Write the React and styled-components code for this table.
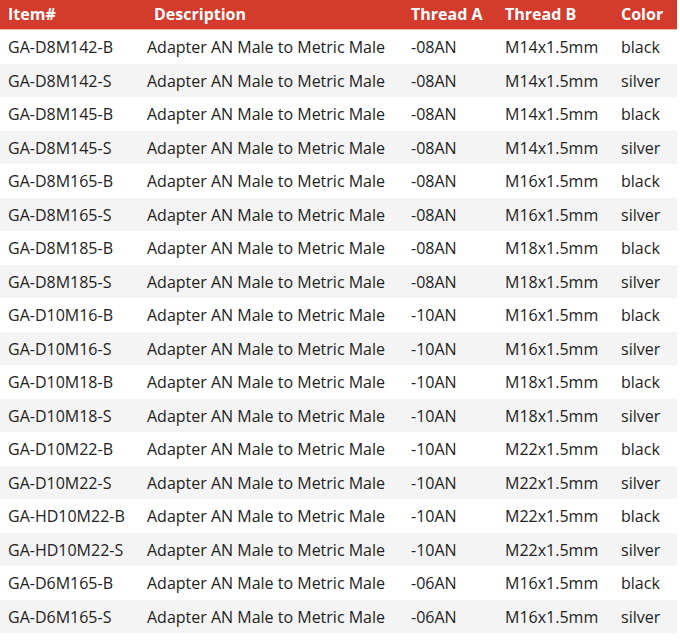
import styled, { createGlobalStyle } from 'styled-components'

const GlobalStyle = createGlobalStyle`
  body {
    margin: 0;
    background: #ffffff;
    font-family: 'Open Sans', 'Liberation Sans', sans-serif;
  }
`

const Table = styled.table`
  width: 677px;
  border-collapse: collapse;
  table-layout: fixed;
  font-size: 16px;
  color: #222222;
`

const HeadRow = styled.tr`
  background: #d33b2c;
  border-bottom: 1px solid #f1b9b2;
`

const HeadCell = styled.th`
  box-sizing: border-box;
  height: 29px;
  padding: 0 0 1px ${(props) => props.$pad || 8}px;
  text-align: left;
  font-weight: 700;
  color: #ffffff;
  line-height: 28px;
  white-space: nowrap;
`

const Row = styled.tr`
  background: ${(props) => (props.$odd ? '#f4f4f4' : '#ffffff')};
`

const Cell = styled.td`
  box-sizing: border-box;
  height: 33.5px;
  padding: 1px 0 0 8px;
  line-height: 32.5px;
  white-space: nowrap;
`

const rows = [
  ['GA-D8M142-B', '-08AN', 'M14x1.5mm', 'black'],
  ['GA-D8M142-S', '-08AN', 'M14x1.5mm', 'silver'],
  ['GA-D8M145-B', '-08AN', 'M14x1.5mm', 'black'],
  ['GA-D8M145-S', '-08AN', 'M14x1.5mm', 'silver'],
  ['GA-D8M165-B', '-08AN', 'M16x1.5mm', 'black'],
  ['GA-D8M165-S', '-08AN', 'M16x1.5mm', 'silver'],
  ['GA-D8M185-B', '-08AN', 'M18x1.5mm', 'black'],
  ['GA-D8M185-S', '-08AN', 'M18x1.5mm', 'silver'],
  ['GA-D10M16-B', '-10AN', 'M16x1.5mm', 'black'],
  ['GA-D10M16-S', '-10AN', 'M16x1.5mm', 'silver'],
  ['GA-D10M18-B', '-10AN', 'M18x1.5mm', 'black'],
  ['GA-D10M18-S', '-10AN', 'M18x1.5mm', 'silver'],
  ['GA-D10M22-B', '-10AN', 'M22x1.5mm', 'black'],
  ['GA-D10M22-S', '-10AN', 'M22x1.5mm', 'silver'],
  ['GA-HD10M22-B', '-10AN', 'M22x1.5mm', 'black'],
  ['GA-HD10M22-S', '-10AN', 'M22x1.5mm', 'silver'],
  ['GA-D6M165-B', '-06AN', 'M16x1.5mm', 'black'],
  ['GA-D6M165-S', '-06AN', 'M16x1.5mm', 'silver'],
]

const App = () => {
  return (
    <>
      <GlobalStyle />
      <Table>
        <colgroup>
          <col style={{ width: 139 }} />
          <col style={{ width: 264 }} />
          <col style={{ width: 94 }} />
          <col style={{ width: 116 }} />
          <col />
        </colgroup>
        <thead>
          <HeadRow>
            <HeadCell>Item#</HeadCell>
            <HeadCell $pad={15}>Description</HeadCell>
            <HeadCell>Thread A</HeadCell>
            <HeadCell>Thread B</HeadCell>
            <HeadCell>Color</HeadCell>
          </HeadRow>
        </thead>
        <tbody>
          {rows.map(([item, a, b, color], i) => (
            <Row key={item} $odd={i % 2 === 1}>
              <Cell>{item}</Cell>
              <Cell>Adapter AN Male to Metric Male</Cell>
              <Cell>{a}</Cell>
              <Cell>{b}</Cell>
              <Cell>{color}</Cell>
            </Row>
          ))}
        </tbody>
      </Table>
    </>
  )
}

export default App
